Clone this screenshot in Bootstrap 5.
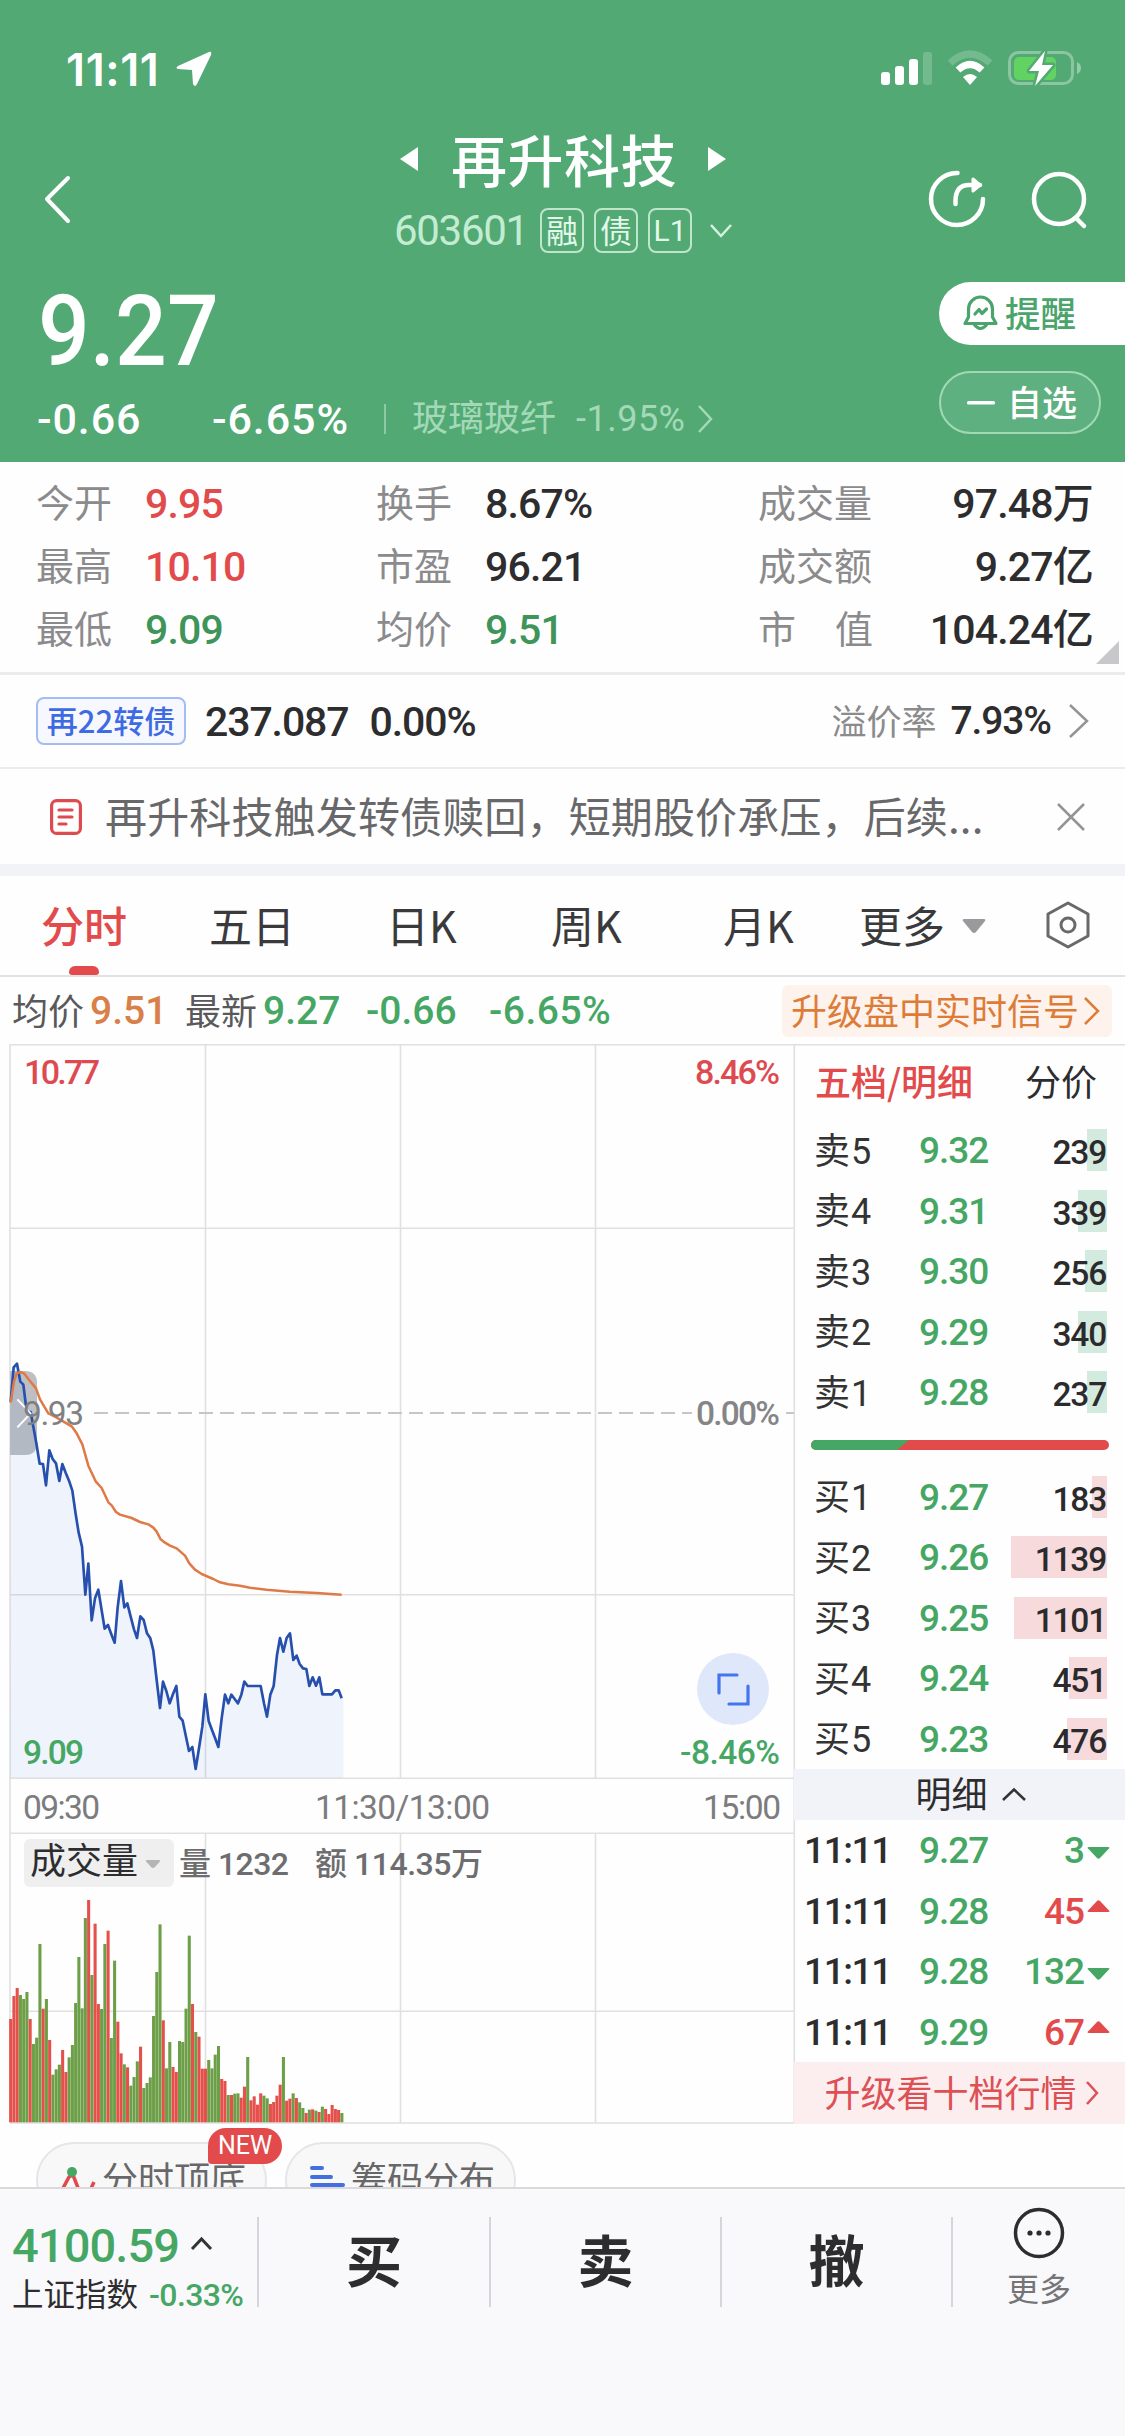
<!DOCTYPE html>
<html lang="zh-CN">
<head>
<meta charset="utf-8">
<meta name="viewport" content="width=device-width, initial-scale=1">
<title>再升科技 603601</title>
<link rel="stylesheet" href="https://cdn.jsdelivr.net/npm/bootstrap@5.3.0/dist/css/bootstrap.min.css">
<style>
:root{--up:#e24a4b;--down:#46a765;--head:#52a974;--ink:#2d2d2f;--grey:#8b8b8d}
body{width:1125px;height:2436px;overflow:hidden;background:#fefefe;color:var(--ink);font-family:"Noto Sans CJK SC",sans-serif;line-height:1}
svg{display:block;flex:none;overflow:visible}
.num{font-family:Roboto,"Noto Sans CJK SC",sans-serif;font-weight:500;white-space:nowrap}
.up{color:var(--up)}.down{color:var(--down)}
.medium{font-weight:500}
.hd{background:var(--head);color:#fff;height:462px}
.statusbar{height:138px;padding:0 43px 0 66px}
.clock{font:600 45px Inter,sans-serif;letter-spacing:.6px;width:110px}
.titlebar{height:132px;padding:0 38px 0 44px}
.back-ic{width:235px}.tool-ic{width:240px;padding-bottom:8px}
.name-row{height:52px;margin-top:-5px}
.code-row{height:82px;margin-top:6px}
.stock-name{font-size:56px;font-weight:500;height:56px;line-height:54px;letter-spacing:.5px;margin:0 30px 0 32px}
.code{font-size:42px;font-weight:400;color:#c3ecd2;letter-spacing:-1.3px;width:146px}
.tagbox{width:44px;height:45px;border:2px solid #bfe6cd;border-radius:8px;font-size:32px;color:#e3f8ea;margin-right:10px;padding-bottom:3px}
.tagbox.num{font-size:30px;font-weight:400;padding-bottom:0}
.quote{height:192px}
.last-price{font-size:98px;padding:13px 0 0;margin-left:38px;height:116px;transform:scaleX(.93);transform-origin:left}
.chg{font-size:43px;padding-left:37px;height:66px;letter-spacing:.9px}
.sector{font-size:36px;color:#a3d9b8;letter-spacing:0}
.sector .num{font-size:36px;font-weight:400;margin-left:20px;letter-spacing:.5px}
.vbar{width:2px;height:30px;background:#8bcaa4;margin:0 26px 0 35px}
.pill-a{margin-top:12px;width:186px;height:63px;border-radius:32px 0 0 32px;background:#fff;color:#4aa46c;font-size:35.5px;font-weight:500;padding:0 0 4px 24px}
.pill-b{margin-top:26px;width:162px;height:63px;border-radius:32px;border:2px solid #a0dab5;background:#5fb080;font-size:35px;font-weight:500;padding:0 0 4px 26px}
.stats{height:213px;padding:10px 32px 0 36px;border-bottom:3px solid #ececee}
.stat-line{height:63px;font-size:38px;color:var(--grey)}
.stat-line>span{padding-bottom:5px}
.stat-line>.num{font-size:41px;color:var(--ink);letter-spacing:-.8px;padding:2px 0 0}
.stat-line .num.up{color:var(--up)}.stat-line .num.down{color:#3f9459}
.sa{width:109px}.sb{width:231px}.sc{width:273px}.sd{width:115px}
.corner{right:6px;bottom:8px}
.bond{height:94px;padding:0 36px;border-bottom:2px solid #ebebed}
.bond-tag{width:150px;height:48px;border:2px solid #a3bcf4;border-radius:8px;background:#f6f8fe;color:#3e6be3;font-size:31px;font-weight:500;padding-bottom:4px}
.bond .num{font-size:41px;letter-spacing:-1.1px;padding-top:2px}
.news{height:95px;padding:0 41px 0 50px;font-size:42px;color:#68686a}
.band{height:12px;background:#f2f3f6}
.tabs{height:101px;border-bottom:2px solid #e2e2e5;font-size:43px;color:#3a3a3c;padding-left:41px}
.tabs>span{height:99px;line-height:96px}
.t1{width:168px}.t2{width:177px}.t3{width:165px}.t4{width:172px}.t5{width:136px}.t6{width:103px}
.underbar{left:28px;bottom:0;width:30px;height:9px;border-radius:6px 6px 3px 3px;background:var(--up)}
.info{height:67px;font-size:36px;color:#59595b;padding:0 13px 0 12px}
.info>span{padding-bottom:4px}
.info>.num{font-size:39px;padding:2px 0 0}
.avgc{color:#d97f4a}
.signal{width:330px;height:52px;border-radius:6px;background:#fdf3ec;color:#dd7c38;padding-left:9px}
.chartbox{width:794px;height:1080px}
.chartbox text{font-family:Roboto,"Noto Sans CJK SC",sans-serif}
.book{width:331px}
.book-head{height:76px;font-size:36px;padding:0 28px 5px 21px}
.lv{height:60.5px;padding-left:20px;font-size:36px;color:#333}
.lv .num,.tick .num{font-size:37px;letter-spacing:-1px}
.lv-name{width:105px;padding-bottom:1px}
.lv>.num,.tick>.num{padding-top:1px}
.lv-name .num{font-weight:400!important;font-size:36px!important;margin-left:1px}
.lv .qty{font-size:33.500px;letter-spacing:-1.2px;color:#2b2b2d;padding-right:1px;height:42px;line-height:45px;width:98px;margin-right:18px;z-index:0;text-align:right}
.depth{position:absolute;right:0;top:0;height:42px;z-index:-1}
.ask{background:#d3eadf}.bid{background:#f6dadc}
.balance{height:44px;padding:0 16px 0 17px}
.detail-bar{height:51px;background:#f2f3f8;font-size:36px;padding:0 0 5px 22px}
.tick{height:60.5px;padding-left:10px;color:var(--ink)}
.tick>.tick-t{width:115px;letter-spacing:-1.4px}
.upgrade{height:62px;background:#fcedef;color:#dd5054;font-size:36px;padding:0 0 4px 4px}
.chips{height:63px;padding:18px 0 0 36px;gap:18px}
.chip{width:231px;height:76px;flex:none;border:2px solid #e6e6e8;border-radius:38px;background:#f8f8f8;font-size:36px;color:#68686a;padding:7px 0 0 22px}
.newtag{left:208px;top:4px;width:74px;height:36px;border-radius:18px 18px 18px 4px;background:var(--up);font:400 25px/36px Roboto,sans-serif;color:#fff}
.foot{height:250px;background:#f9f9fc;border-top:2px solid #dadadd}
.foot-row{height:146px}
.idx{width:257px;padding:32px 0 0 12px}
.idx-a{font-size:47px;letter-spacing:-.9px;height:48px}
.idx-b{font-size:31.500px;margin-top:8px}
.idx-b .num{font-size:32px;letter-spacing:-.6px}
.act{width:230px;font-size:56px;font-weight:700;padding-bottom:8px}
.fdiv{width:2px;height:90px;background:#d6d6da}
.more{font-size:32px;color:#757577;padding-top:18px}
</style>
<script src="https://cdn.jsdelivr.net/npm/bootstrap@5.3.0/dist/js/bootstrap.bundle.min.js"></script>
</head>
<body>
<header class="hd">
  <div class="statusbar d-flex align-items-center">
    <span class="clock">11:11</span>
    <svg width="36" height="36" viewBox="0 0 36 36"><path d="M33 1 L2 15 Q-1 17 2 18 L16 19 L17 33 Q19 37 21 33 L35 4 Q36 0 33 1Z" fill="#fff"/></svg>
    <svg class="ms-auto" width="201" height="36" viewBox="0 0 201 36">
      <g fill="#fff"><rect x="0" y="21" width="9" height="13" rx="3"/><rect x="14" y="15" width="9" height="19" rx="3"/><rect x="28" y="8" width="9" height="26" rx="3"/><rect x="42" y="1" width="9" height="33" rx="3" opacity=".2"/></g>
      <path d="M69 12 Q89 -6 109 12" fill="none" stroke="#fff" stroke-opacity=".2" stroke-width="7"/>
      <path d="M77 19 Q89 8 101 19" fill="none" stroke="#fff" stroke-width="7"/>
      <path d="M82 26 Q89 20 96 26 L89 34Z" fill="#fff"/>
      <rect x="128.500" y="1.500" width="63" height="31" rx="9" fill="none" stroke="#fff" stroke-opacity=".33" stroke-width="3"/>
      <rect x="133" y="6" width="42" height="23" rx="5" fill="#62d263"/>
      <path d="M196 11 Q200 13 200 17 Q200 21 196 23Z" fill="#fff" opacity=".4"/>
      <path d="M164 0 L148 20 H158 L154 35 L172 14 H161Z" fill="#fff" stroke="#52a974" stroke-width="5" stroke-linejoin="round" paint-order="stroke"/>
    </svg>
  </div>
  <div class="titlebar d-flex justify-content-between">
    <div class="back-ic d-flex align-items-center"><svg width="27" height="46" viewBox="0 0 27 46"><path d="M24 1 L3 22 L24 44" fill="none" stroke="#fff" stroke-width="4" stroke-linecap="round" stroke-linejoin="round" transform="translate(0 -4)"/></svg></div>
    <div class="d-flex flex-column align-items-center">
      <div class="name-row d-flex align-items-center">
        <svg width="20" height="26" viewBox="0 0 20 26"><path d="M19 1V25L1 13Z" fill="#fff"/></svg>
        <span class="stock-name">再升科技</span>
        <svg width="20" height="26" viewBox="0 0 20 26"><path d="M1 1V25L19 13Z" fill="#fff"/></svg>
      </div>
      <div class="code-row d-flex align-items-center">
        <span class="num code">603601</span>
        <span class="tagbox d-flex align-items-center justify-content-center">融</span>
        <span class="tagbox d-flex align-items-center justify-content-center">债</span>
        <span class="tagbox num d-flex align-items-center justify-content-center">L1</span>
        <svg class="ms-2" width="22" height="14" viewBox="0 0 22 14"><path d="M1 1L11 12L21 1" fill="none" stroke="#d6f3e0" stroke-width="2.500"/></svg>
      </div>
    </div>
    <div class="tool-ic d-flex align-items-center justify-content-end">
      <svg width="161" height="60" viewBox="0 0 161 60"><g fill="none" stroke="#fff" stroke-width="4.500" stroke-linecap="round" stroke-linejoin="round" transform="translate(0 -4)">
        <path d="M31.500 7 A26 26 0 1 0 57 33"/><path d="M29.500 38 V34 Q30 19 43 19 H54"/><path d="M47 13 L54 19 L47 25Z" fill="#fff" stroke-width="3"/>
        <circle cx="133" cy="33" r="25"/><path d="M150 52 L158 60"/></g></svg>
    </div>
  </div>
  <div class="quote d-flex justify-content-between">
    <div>
      <div class="num last-price">9.27</div>
      <div class="num chg d-flex align-items-center"><span style="width:175px">-0.66</span><span>-6.65%</span>
        <i class="vbar"></i><span class="sector d-flex align-items-center fw-normal">玻璃玻纤<span class="num">-1.95%</span><svg style="margin-left:13px" width="15" height="28" viewBox="0 0 15 28"><path d="M1 1L13 14L1 27" fill="none" stroke="#a3d9b8" stroke-width="2.500"/></svg></span></div>
    </div>
    <div style="width:186px">
      <div class="pill-a d-flex align-items-center">
        <svg style="margin:3px 7px 0 0" width="35" height="36" viewBox="0 0 35 36"><g fill="none" stroke="#4aa46c" stroke-width="3.200" stroke-linejoin="round" stroke-linecap="round"><path d="M2 28.500 L5.500 22 V14 A12 12 0 0 1 29.500 14 V22 L33 28.500Z"/><path d="M11 29 Q17.500 38 24 29"/><path d="M12 19 L16 14.500 L19 18.500 L23.500 14"/></g></svg>提醒</div>
      <div class="pill-b d-flex align-items-center"><svg style="margin:4px 12px 0 0" width="28" height="4"><rect width="28" height="3.500" rx="1.500" fill="#fff"/></svg><span>自选</span></div>
    </div>
  </div>
</header>

<section class="stats position-relative">
  <div class="stat-line d-flex align-items-center"><span class="sa">今开</span><span class="num up sb">9.95</span><span class="sa">换手</span><span class="num sc">8.67%</span><span class="sd">成交量</span><span class="num ms-auto">97.48万</span></div>
  <div class="stat-line d-flex align-items-center"><span class="sa">最高</span><span class="num up sb">10.10</span><span class="sa">市盈</span><span class="num sc">96.21</span><span class="sd">成交额</span><span class="num ms-auto">9.27亿</span></div>
  <div class="stat-line d-flex align-items-center"><span class="sa">最低</span><span class="num down sb">9.09</span><span class="sa">均价</span><span class="num down sc">9.51</span><span class="sd d-flex justify-content-between"><span>市</span><span>值</span></span><span class="num ms-auto">104.24亿</span></div>
  <svg class="corner position-absolute" width="23" height="23" viewBox="0 0 23 23"><path d="M23 0V23H0Z" fill="#c8c8ca"/></svg>
</section>
<section class="bond d-flex align-items-center">
  <span class="bond-tag d-flex align-items-center justify-content-center">再22转债</span>
  <span class="num" style="margin-left:19px">237.087</span><span class="num" style="margin-left:21px">0.00%</span>
  <span class="ms-auto" style="font-size:35px;color:#8b8b8d;padding-bottom:4px">溢价率</span><span class="num" style="font-size:39px;margin-left:14px;padding:0">7.93%</span>
  <svg style="margin-left:18px" width="20" height="34" viewBox="0 0 20 34"><path d="M1 1L18 17L1 33" fill="none" stroke="#949496" stroke-width="2.500"/></svg>
</section>
<section class="news d-flex align-items-center">
  <svg width="32" height="36" viewBox="0 0 32 36"><g fill="none" stroke="#dd4a50" stroke-width="3.200" stroke-linecap="round"><rect x="1.600" y="1.600" width="28.800" height="32.800" rx="5"/><path d="M9 11H22M9 18H22M9 25H16"/></g></svg>
  <span class="text-nowrap" style="margin-left:23px;padding-bottom:3px;letter-spacing:.15px">再升科技触发转债赎回，短期股价承压，后续...</span>
  <svg class="ms-auto" width="26" height="26" viewBox="0 0 26 26"><path d="M0 0L26 26M26 0L0 26" stroke="#949496" stroke-width="2.500"/></svg>
</section>
<div class="band"></div>
<nav class="tabs d-flex">
  <span class="t1 up medium position-relative">分时<i class="underbar position-absolute"></i></span><span class="t2">五日</span><span class="t3">日K</span><span class="t4">周K</span><span class="t5">月K</span><span class="t6">更多</span>
  <svg class="align-self-center" width="24" height="16" viewBox="0 0 24 16"><path d="M2 1H22Q24 1 23 3L14 14Q12 16 10 14L1 3Q0 1 2 1Z" fill="#9a9a9c"/></svg>
  <svg class="align-self-center" style="margin-left:60px" width="44" height="48" viewBox="0 0 44 48"><g fill="none" stroke="#69696b" stroke-width="3" stroke-linejoin="round"><path d="M22 1L42 12V34L22 45L2 34V12Z"/><circle cx="22" cy="23" r="7"/></g></svg>
</nav>
<div class="info d-flex align-items-center">
  <span>均价</span><span class="num avgc" style="width:93px;padding-left:6px">9.51</span><span style="margin-left:8px">最新</span><span class="num down" style="width:109px;padding-left:6px">9.27</span><span class="num down" style="width:123px">-0.66</span><span class="num down" style="letter-spacing:.5px">-6.65%</span>
  <span class="signal ms-auto d-flex align-items-center">升级盘中实时信号<svg style="margin:4px 0 0 5px" width="16" height="28" viewBox="0 0 16 28"><path d="M1 1L14 14L1 27" fill="none" stroke="#dd7c38" stroke-width="2.500"/></svg></span>
</div>

<main class="d-flex">
  <svg class="chartbox" viewBox="0 1044 794 1080">
    <g id="grid" stroke="#e0e0e2" stroke-width="1.600" fill="none">
      <path d="M10 1044.700H1125M10 1228.300H794M10 1594.700H794M10 1778.300H794M10 1833.300H794M10 2011.300H794M10 2123H794"/>
      <path d="M10 1044V2123M794.300 1044V2123M205.500 1044V1778M400.500 1044V1778M595.500 1044V1778M205.500 1833V2123M400.500 1833V2123M595.500 1833V2123"/>
    </g>
    <path d="M94 1413H692M786 1413H794" stroke="#c3c7cc" stroke-width="2" stroke-dasharray="14 7"/>
    <path d="M10 1371H25Q37 1371 37 1383V1443Q37 1455 25 1455H10Z" fill="#bdbfc2"/>
    <g transform="translate(0 1350) scale(.33333)" fill="none" stroke-linejoin="round">
      <path id="fillArea" fill="#3f6fd6" fill-opacity=".08"/>
      <polyline id="priceLine" stroke="#264fae" stroke-width="8"/>
      <polyline stroke="#df7a47" stroke-width="7.500" points="32,158 42,95 50,70 60,66 72,70 85,87 108,115 120,148 145,190 165,200 215,229 230,250 247,283 265,347 287,394 305,414 325,457 335,466 348,486 360,494 395,504 420,516 445,523 460,533 470,545 482,568 495,578 510,587 530,595 555,617 568,640 585,659 605,672 640,687 660,697 685,703 720,707 750,713 800,719 870,725 950,729 1025,734"/>
      <path d="M52 148L92 190L52 232" stroke="#fff" stroke-width="6"/>
    </g>
    <g id="vol" transform="translate(0 1770) scale(.33333)"></g>
    <g font-size="33.500" fill="#858587" font-weight="500">
      <text x="24" y="1084" fill="#dd4a50" textLength="76" font-size="34">10.77</text>
      <text x="695" y="1084" fill="#dd4a50" textLength="85" font-size="34">8.46%</text>
      <text x="23" y="1424.500" textLength="61" fill="#808082" font-weight="400">9.93</text>
      <text x="696" y="1424.500" textLength="84">0.00%</text>
      <text x="23" y="1764" fill="#46a765" textLength="61">9.09</text>
      <text x="680" y="1764" fill="#46a765" textLength="100">-8.46%</text>
      <g font-weight="400" fill="#7c7c7e"><text x="23" y="1819" textLength="77">09:30</text>
      <text x="315" y="1819" textLength="175">11:30/13:00</text>
      <text x="703" y="1819" textLength="78">15:00</text></g>
    </g>
    <rect x="24" y="1839" width="150" height="48" rx="6" fill="#efeff0"/>
    <text x="30" y="1874" style="font-family:'Noto Sans CJK SC'" font-size="36" fill="#2d2d2f">成交量</text>
    <path d="M147 1860H159Q161 1860 159.500 1862L155 1867Q153 1869 151 1867L146.500 1862Q145 1860 147 1860Z" fill="#b4b4b6"/>
    <g font-size="32" font-weight="500" fill="#6d6d6f"><text x="179" y="1874.500" textLength="110">量 1232</text><text x="315" y="1874.500" textLength="168">额 114.35万</text></g>
    <circle cx="733" cy="1689" r="36" fill="#dfe8fa"/>
    <path d="M719 1693V1675H737M729 1704H748V1686" fill="none" stroke="#4475ee" stroke-width="3.200" stroke-linecap="round"/>
  </svg>
  <aside class="book">
    <div class="book-head d-flex align-items-center justify-content-between"><span class="up medium">五档/明细</span><span>分价</span></div>
    <div id="asks"></div>
    <div class="balance d-flex align-items-center"><svg width="298" height="10" viewBox="0 0 298 10"><rect width="298" height="10" rx="5" fill="#e24a4b"/><path d="M5 0H98L86 10H5A5 5 0 0 1 5 0Z" fill="#46a765"/></svg></div>
    <div id="bids"></div>
    <div class="detail-bar d-flex align-items-center justify-content-center">明细<svg style="margin:4px 0 0 14px" width="24" height="13" viewBox="0 0 24 13"><path d="M1 12L12 1.500L23 12" fill="none" stroke="#333" stroke-width="2.500"/></svg></div>
    <div id="ticks"></div>
    <div class="upgrade d-flex align-items-center justify-content-center">升级看十档行情<svg style="margin:4px 0 0 9px" width="13" height="24" viewBox="0 0 13 24"><path d="M1 1L11 12L1 23" fill="none" stroke="#dd5054" stroke-width="2.500"/></svg></div>
  </aside>
</main>

<div class="chips d-flex position-relative overflow-hidden">
  <div class="chip d-flex"><svg style="margin:12px 6px 0 0" width="36" height="36" viewBox="0 0 36 36"><path d="M2 27L9 14L13 12L22 35L27 34L34 19" fill="none" stroke="#e0494d" stroke-width="3.500"/><circle cx="12" cy="9" r="5" fill="#46a765"/></svg><span class="pt-2">分时顶底</span></div>
  <div class="chip d-flex"><svg style="margin:13px 6px 0 0" width="36" height="36" viewBox="0 0 36 36"><path d="M3 4H13M3 13H22M3 21H34" stroke="#436fe0" stroke-width="4" stroke-linecap="round"/></svg><span class="pt-2">筹码分布</span></div>
  <span class="newtag position-absolute text-center">NEW</span>
</div>
<footer class="foot">
  <div class="foot-row d-flex align-items-center">
    <div class="idx align-self-start">
      <div class="num idx-a down d-flex align-items-center">4100.59<svg style="margin-left:12px" width="21" height="13" viewBox="0 0 21 13"><path d="M1 10L10.500 0L20 10" fill="none" stroke="#333" stroke-width="3"/></svg></div>
      <div class="idx-b text-nowrap">上证指数<span class="num down" style="margin-left:11px">-0.33%</span></div>
    </div>
    <i class="fdiv"></i><div class="act text-center">买</div>
    <i class="fdiv"></i><div class="act text-center" style="width:229px">卖</div>
    <i class="fdiv"></i><div class="act text-center" style="width:229px">撤</div>
    <i class="fdiv"></i>
    <div class="more flex-fill d-flex flex-column align-items-center align-self-start"><svg width="52" height="52" viewBox="0 0 52 52"><circle cx="26" cy="26" r="23.500" fill="none" stroke="#2d2d2f" stroke-width="3.500"/><g fill="#2d2d2f"><circle cx="17" cy="26" r="2.600"/><circle cx="26" cy="26" r="2.600"/><circle cx="35" cy="26" r="2.600"/></g></svg><span style="margin-top:12px">更多</span></div>
  </div>
</footer>
<script>
const price="32,155 41,52 51,41 61,95 70,104 80,184 92,186 100,230 109,280 119,341 129,342 138,406 148,301 158,327 168,340 178,393 187,342 197,368 207,392 217,422 227,492 236,548 246,590 256,734 265,641 275,811 285,745 295,719 304,775 314,836 324,825 334,853 344,878 353,772 363,693 373,772 382,760 392,800 402,838 411,864 421,799 431,810 441,850 451,865 460,902 470,990 480,1074 489,995 499,1023 509,1060 519,1032 529,1008 538,1100 548,1112 558,1160 567,1203 577,1191 587,1257 597,1195 607,1130 616,1033 626,1113 636,1140 646,1166 655,1191 665,1105 675,1034 685,1060 694,1034 704,1047 714,1060 724,1034 733,995 743,1008 782,1008 792,1060 801,1100 811,1034 821,1008 831,915 840,864 850,905 860,864 870,850 880,930 890,917 899,942 909,955 919,957 928,1008 938,982 948,1007 958,982 967,1033 996,1033 1006,1021 1016,1021 1025,1045";
document.getElementById('priceLine').setAttribute('points',price);
document.getElementById('fillArea').setAttribute('d','M30,1283 L'+price+' L1030,1045 V1283 Z');
// one bar per minute: r = rising, g = falling, followed by the bar's top
const vol="r747 r678 r654 g675 g687 g666 r747 g822 g803 g522 r716 g687 r810 g914 g898 g884 r840 r906 g862 g825 g699 g561 g715 g444 r390 g615 r461 r702 g717 g522 r482 g804 g572 r755 r850 g883 r892 g947 g921 g874 r830 g954 g939 g922 g738 g606 g463 r751 g895 g816 r891 r906 g813 g816 g716 g497 r702 g786 r800 r896 r896 g870 g895 g854 g828 r927 r933 g975 r975 g971 g970 r983 r950 g861 r991 r979 r1004 r970 g977 g985 r1002 r996 r977 r944 g861 r992 r986 g970 r984 g997 g1014 r1029 g1019 r1018 g1022 r1026 g1010 r1017 r1032 r1005 r1017 r1020 g1029".split(' ');
document.getElementById('vol').innerHTML=vol.map((v,i)=>{const y=+v.slice(1);return `<rect x="${(27.5+i*9.74).toFixed(1)}" y="${y}" width="9.2" height="${1057-y}" fill="${v[0]=='r'?'#e5504b':'#6d9f49'}"/>`}).join('');
const lv=(n,i,p,q,w,c)=>`<div class="lv d-flex align-items-center"><span class="lv-name">${n}<span class="num">${i}</span></span><span class="num down">${p}</span><span class="num qty ms-auto position-relative">${q}<i class="depth ${c}" style="width:${w}px"></i></span></div>`;
document.getElementById('asks').innerHTML=[[5,'9.32',239,20],[4,'9.31',339,29],[3,'9.30',256,22],[2,'9.29',340,29],[1,'9.28',237,20]].map(r=>lv('卖',...r,'ask')).join('');
document.getElementById('bids').innerHTML=[[1,'9.27',183,15],[2,'9.26',1139,96],[3,'9.25',1101,93],[4,'9.24',451,38],[5,'9.23',476,40]].map(r=>lv('买',...r,'bid')).join('');
document.getElementById('ticks').innerHTML=[['9.27',3,0],['9.28',45,1],['9.28',132,0],['9.29',67,1]].map(([p,q,u])=>`<div class="tick d-flex align-items-center"><span class="num tick-t">11:11</span><span class="num down">${p}</span><span class="num ms-auto ${u?'up':'down'}">${q}</span><svg width="23" height="24" viewBox="0 0 23 24" style="margin:0 15px 0 3px"><path d="${u?'M2 13H21Q24 13 21 10.500L13 2Q11.500 .5 10 2L2 10.500Q-1 13 2 13Z':'M2 9H21Q24 9 21 11.500L13 20Q11.500 21.500 10 20L2 11.500Q-1 9 2 9Z'}" fill="${u?'#e24a4b':'#46a765'}"/></svg></div>`).join('');
</script>
</body>
</html>
